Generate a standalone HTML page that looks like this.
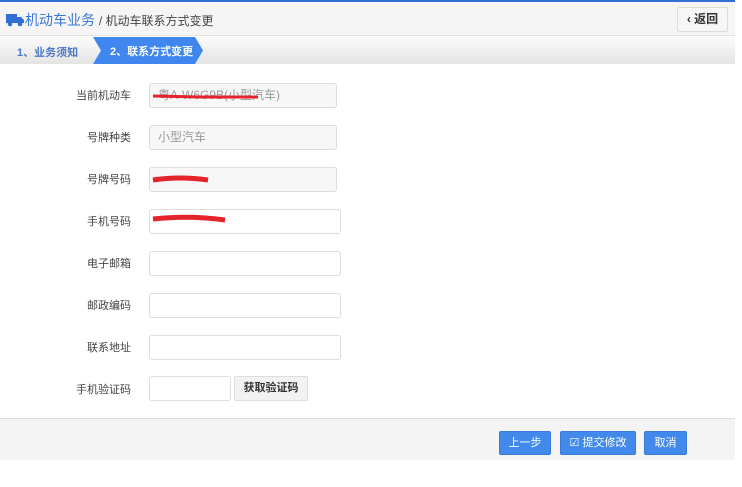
<!DOCTYPE html>
<html><head><meta charset="utf-8"><style>
*{margin:0;padding:0;box-sizing:border-box}
body{width:742px;height:487px;background:#fff;font-family:"Liberation Sans","Noto Sans CJK SC",sans-serif;position:relative;overflow:hidden}
.top{position:absolute;left:0;top:0;width:735px;height:2px;background:#2f6fd6}
.hdr{position:absolute;left:0;top:2px;width:735px;height:34px;background:#f5f5f5;border-bottom:1px solid #e2e2e2}
.hdr .t{position:absolute;left:25px;top:8px;font-size:14px;color:#3a78d4}
.hdr .t span{font-size:12px;color:#444}
.back{position:absolute;left:677px;top:5px;width:51px;height:25px;border:1px solid #ddd;background:#f6f6f6;border-radius:2px;font-size:12px;font-weight:bold;color:#333;text-align:center;line-height:23px}
.steps{position:absolute;left:0;top:37px;width:735px;height:27px;background:linear-gradient(#fbfbfb,#e4e4e4)}
.s1{position:absolute;left:17px;top:7px;font-size:11px;font-weight:bold;color:#4a78c4}
.lab{position:absolute;width:131px;text-align:right;font-size:11px;color:#444}
.in{position:absolute;left:149px;height:25px;border:1px solid #ddd;border-radius:3px;background:#fff;font-size:12px;color:#999;padding-left:8px;line-height:23px}
.ro{background:#f7f7f7}
.foot{position:absolute;left:0;top:418px;width:735px;height:42px;background:#f4f4f4;border-top:1px solid #ddd}
.b{position:absolute;top:12px;height:24px;background:#4289ec;border:1px solid #3a7ad8;color:#fff;font-size:11px;text-align:center;line-height:22px;border-radius:2px}
</style></head><body>
<div class="top"></div>
<div class="hdr"><svg style="position:absolute;left:6px;top:11px" width="19" height="14"><rect x="0" y="1" width="11" height="9" fill="#2f6fd6"/><path d="M11 4h4l3 3v3h-7z" fill="#2f6fd6"/><circle cx="4" cy="11" r="2.3" fill="#2f6fd6"/><circle cx="14" cy="11" r="2.3" fill="#2f6fd6"/></svg><div class="t">机动车业务 <span>/ 机动车联系方式变更</span></div><div class="back">‹ 返回</div></div>
<div class="steps"><div class="s1">1、业务须知</div>
<svg style="position:absolute;left:93px;top:0" width="112" height="27"><path d="M0 0H102L110 13.5L102 27H0L8 13.5Z" fill="#3f86ee"/><text x="17" y="18" font-size="11" font-weight="bold" fill="#fff" font-family="Liberation Sans,Noto Sans CJK SC,sans-serif">2、联系方式变更</text></svg></div>
<div class="lab" style="top:87px">当前机动车</div><div class="in ro" style="top:83px;width:188px">粤A·W6G9B(小型汽车)</div>
<div class="lab" style="top:129px">号牌种类</div><div class="in ro" style="top:125px;width:188px">小型汽车</div>
<div class="lab" style="top:171px">号牌号码</div><div class="in ro" style="top:167px;width:188px"></div>
<div class="lab" style="top:213px">手机号码</div><div class="in" style="top:209px;width:192px"></div>
<div class="lab" style="top:255px">电子邮箱</div><div class="in" style="top:251px;width:192px"></div>
<div class="lab" style="top:297px">邮政编码</div><div class="in" style="top:293px;width:192px"></div>
<div class="lab" style="top:339px">联系地址</div><div class="in" style="top:335px;width:192px"></div>
<div class="lab" style="top:381px">手机验证码</div><div class="in" style="top:376px;width:82px"></div>
<div style="position:absolute;left:234px;top:376px;width:74px;height:25px;border:1px solid #ddd;background:#f2f2f2;font-size:11px;font-weight:bold;color:#333;text-align:center;line-height:23px;border-radius:2px">获取验证码</div>
<svg style="position:absolute;left:0;top:0" width="742" height="487"><path d="M153 96L200 97L258 97" stroke="#e4232a" stroke-width="3" fill="none"/><path d="M153 180Q180 176 208 180" stroke="#e4232a" stroke-width="5" fill="none"/><path d="M153 219Q190 215 225 220" stroke="#e4232a" stroke-width="5" fill="none"/></svg>
<div class="foot"><div class="b" style="left:499px;width:52px">上一步</div><div class="b" style="left:560px;width:76px">☑ 提交修改</div><div class="b" style="left:644px;width:43px">取消</div></div>
</body></html>
